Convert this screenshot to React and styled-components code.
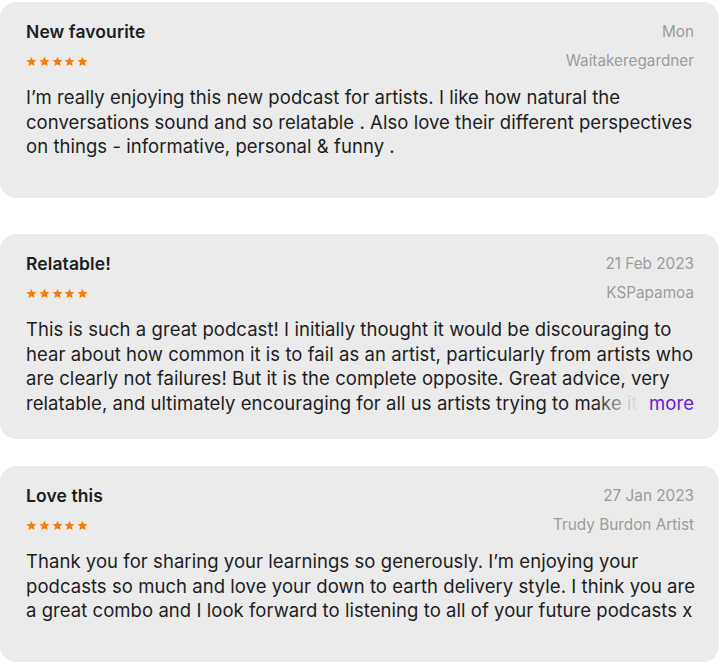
import React from 'react'
import styled, { createGlobalStyle } from 'styled-components'

const GlobalStyle = createGlobalStyle`
  body {
    margin: 0;
    background: #ffffff;
    font-family: Inter, "Liberation Sans", Arial, sans-serif;
    -webkit-font-smoothing: antialiased;
  }
`

const reviews = [
  {
    title: 'New favourite',
    date: 'Mon',
    author: 'Waitakeregardner',
    lines: [
      'I’m really enjoying this new podcast for artists. I like how natural the',
      'conversations sound and so relatable . Also love their different perspectives',
      'on things - informative, personal & funny .',
    ],
    height: 196,
    top: 2,
  },
  {
    title: 'Relatable!',
    date: '21 Feb 2023',
    author: 'KSPapamoa',
    lines: [
      'This is such a great podcast! I initially thought it would be discouraging to',
      'hear about how common it is to fail as an artist, particularly from artists who',
      'are clearly not failures! But it is the complete opposite. Great advice, very',
      'relatable, and ultimately encouraging for all us artists trying to make it',
    ],
    more: true,
    height: 205,
    top: 36,
  },
  {
    title: 'Love this',
    date: '27 Jan 2023',
    author: 'Trudy Burdon Artist',
    lines: [
      'Thank you for sharing your learnings so generously. I’m enjoying your',
      'podcasts so much and love your down to earth delivery style. I think you are',
      'a great combo and I look forward to listening to all of your future podcasts x',
    ],
    height: 196,
    top: 27,
  },
]

const Star = () => (
  <svg width="11" height="11" viewBox="0 0 24 24">
    <path
      fill="#ff7a00"
      d="M12 1.5l3.1 7.1 7.7.7-5.8 5.1 1.7 7.6L12 18l-6.7 4 1.7-7.6-5.8-5.1 7.7-.7z"
    />
  </svg>
)

const App = () => (
  <>
    <GlobalStyle />
    <List>
      {reviews.map((r) => (
        <Card key={r.title} $height={r.height} $top={r.top}>
          <HeaderRow>
            <Title>{r.title}</Title>
            <DateText>{r.date}</DateText>
          </HeaderRow>
          <MetaRow>
            <Stars>
              {[0, 1, 2, 3, 4].map((i) => (
                <Star key={i} />
              ))}
            </Stars>
            <Author>{r.author}</Author>
          </MetaRow>
          <Body>
            {r.lines.map((l, i) => (
              <Line key={i}>{l}</Line>
            ))}
            {r.more && (
              <More>
                <Fade />
                <MoreLink>more</MoreLink>
              </More>
            )}
          </Body>
        </Card>
      ))}
    </List>
  </>
)

const List = styled.div`
  display: flex;
  flex-direction: column;
  width: 720px;
`

const Card = styled.div`
  box-sizing: border-box;
  height: ${(p) => p.$height}px;
  margin-top: ${(p) => p.$top}px;
  margin-right: 1px;
  padding: 16px 25px 0 26px;
  background: #ebebeb;
  border-radius: 16px;
  color: #1d1d1f;
`

const HeaderRow = styled.div`
  display: flex;
  justify-content: space-between;
  align-items: center;
  height: 26px;
`

const Title = styled.div`
  font-size: 17.5px;
  font-weight: 600;
  letter-spacing: 0.1px;
`

const DateText = styled.div`
  font-size: 15.3px;
  color: #9b9b9b;
`

const MetaRow = styled.div`
  display: flex;
  justify-content: space-between;
  align-items: center;
  height: 20px;
  margin-top: 6px;
`

const Stars = styled.div`
  display: flex;
  gap: 1.8px;
  padding-top: 3px;
`

const Author = styled.div`
  font-size: 15.3px;
  color: #9b9b9b;
`

const Body = styled.div`
  position: relative;
  margin-top: 15px;
  font-size: 18.5px;
  line-height: 24.5px;
  letter-spacing: 0.05px;
`

const Line = styled.div`
  white-space: nowrap;
`

const More = styled.div`
  position: absolute;
  right: 0;
  bottom: 0;
  display: flex;
  height: 24.5px;
`

const Fade = styled.div`
  width: 46px;
  background: linear-gradient(to right, rgba(235, 235, 235, 0), rgba(235, 235, 235, 0.85) 75%, #ebebeb);
`

const MoreLink = styled.span`
  background: #ebebeb;
  padding-left: 8px;
  color: #6a16e4;
`

export default App
